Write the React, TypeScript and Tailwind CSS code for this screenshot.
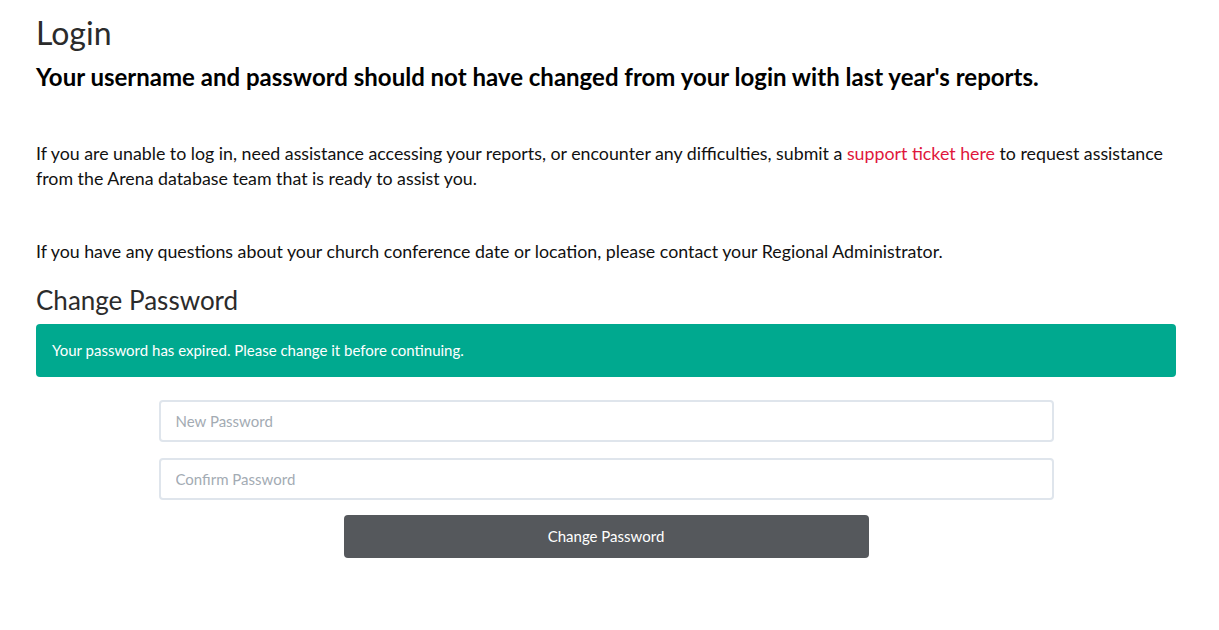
export default function App() {
  return (
    <div className="min-h-screen bg-white font-['Lato','Liberation_Sans',sans-serif] text-[#111]">
      <div className="ml-9 w-[1140px] pt-[14px]">
        <h1 className="text-[32px] leading-[38px] font-normal text-[#2b2b2b]">Login</h1>
        <h2 className="mt-[10px] text-[24px] leading-[30px] font-bold text-black">
          Your username and password should not have changed from your login with last year's reports.
        </h2>

        <p className="mt-[49px] text-[17.8px] leading-[25px]">
          If you are unable to log in, need assistance accessing your reports, or encounter any difficulties, submit a{" "}
          <a href="#" className="text-[#e0173c]">support ticket here</a> to request assistance from the Arena database
          team that is ready to assist you.
        </p>

        <p className="mt-[48px] text-[17.8px] leading-[25px]">
          If you have any questions about your church conference date or location, please contact your Regional
          Administrator.
        </p>

        <h3 className="mt-[19px] text-[26px] leading-[34px] font-normal text-[#2b2b2b]">Change Password</h3>

        <div className="mt-[7px] rounded bg-[#00a98f] px-4 py-[16px] text-[15px] leading-[21px] text-white">
          Your password has expired. Please change it before continuing.
        </div>

        <form className="mt-[23px] flex flex-col items-center" onSubmit={(e) => e.preventDefault()}>
          <input
            type="password"
            placeholder="New Password"
            className="h-[42px] w-[895px] rounded border-2 border-[#dfe5ec] px-[15px] text-[15px] placeholder:text-[#a3abb3] outline-none"
          />
          <input
            type="password"
            placeholder="Confirm Password"
            className="mt-[16px] h-[42px] w-[895px] rounded border-2 border-[#dfe5ec] px-[15px] text-[15px] placeholder:text-[#a3abb3] outline-none"
          />
          <button
            type="submit"
            className="mt-[15px] h-[43px] w-[525px] rounded bg-[#55585c] text-[15px] text-white"
          >
            Change Password
          </button>
        </form>
      </div>
    </div>
  );
}
